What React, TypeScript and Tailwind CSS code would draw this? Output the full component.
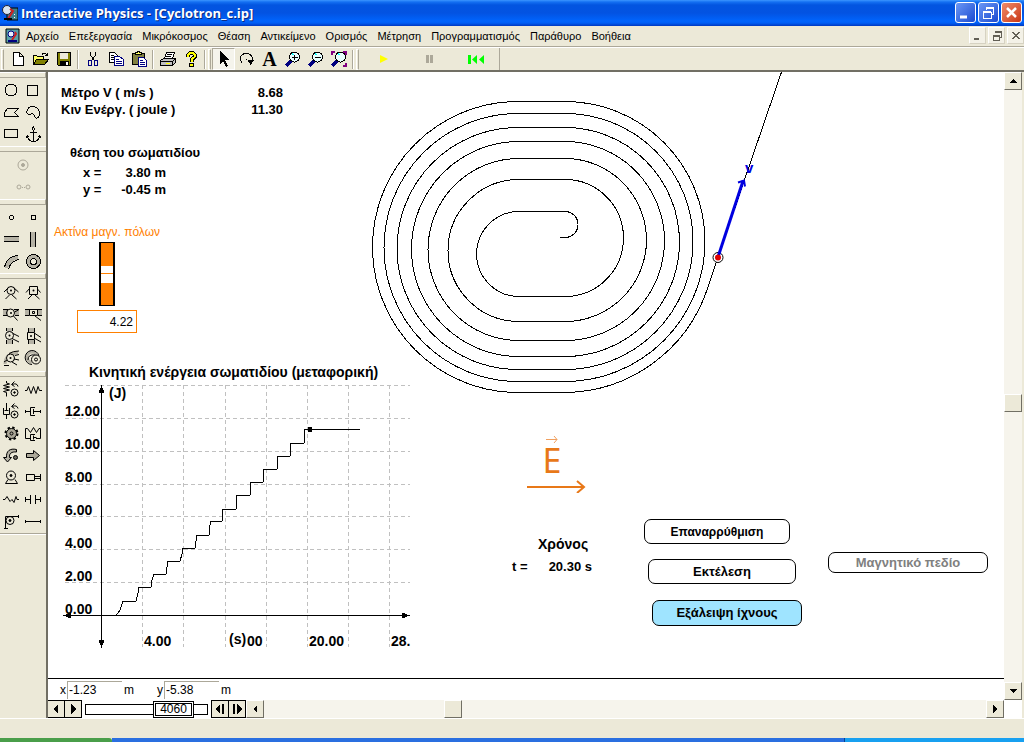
import type { ReactNode } from "react";

const menus = [
  "Αρχείο",
  "Επεξεργασία",
  "Μικρόκοσμος",
  "Θέαση",
  "Αντικείμενο",
  "Ορισμός",
  "Μέτρηση",
  "Προγραμματισμός",
  "Παράθυρο",
  "Βοήθεια",
];

type Tool = { label: string; icon: ReactNode };

const fileTools: Tool[] = [
  {
    label: "New",
    icon: <path d="M3.5 1.5h6l4 4v9h-10zM9.5 1.5v4h4" fill="#fff" stroke="#000" />,
  },
  {
    label: "Open",
    icon: (
      <>
        <path d="M.5 13.5v-9h3l1 1h6v3" fill="#ffff66" stroke="#000" />
        <path d="M.5 13.5l3-5h12l-4 5z" fill="#808000" stroke="#000" />
        <path d="M9 3.5c1-2 4-2 5 1M14.500 1.500v3h-3" fill="none" stroke="#000" />
      </>
    ),
  },
  {
    label: "Save",
    icon: (
      <>
        <path d="M1.500 1.500h13v13h-12l-1-1z" fill="#808000" stroke="#000" />
        <path d="M4 2h8v6H4z" fill="#ece9d8" />
        <path d="M4 10h9v4H4z" fill="#000" />
        <path d="M10 11h2v3h-2z" fill="#fff" />
      </>
    ),
  },
];

const editTools: Tool[] = [
  {
    label: "Cut",
    icon: (
      <>
        <path d="M5.500 1v3l4 6M10.500 1v3l-4 6" fill="none" stroke="#000" />
        <ellipse cx="5" cy="12" rx="2" ry="2.500" fill="none" stroke="#000080" />
        <ellipse cx="11" cy="12" rx="2" ry="2.500" fill="none" stroke="#000080" />
      </>
    ),
  },
  {
    label: "Copy",
    icon: (
      <>
        <path d="M1.500 1.500h5l3 3v7h-8z" fill="#fff" stroke="#000" />
        <path d="M3 4.500h3M3 6.500h4M3 8.500h4" stroke="#000" />
        <path d="M6.500 5.500h5l4 3v6h-9z" fill="#fff" stroke="#000080" />
        <path d="M8 8.500h3M8 10.500h6M8 12.500h6" stroke="#000080" />
      </>
    ),
  },
  {
    label: "Paste",
    icon: (
      <>
        <path d="M1.500 2.500h12v11h-12z" fill="#808040" stroke="#000" />
        <path d="M4.500 3.500v-2h2v-1h2v1h2v2z" fill="#ffff66" stroke="#000" />
        <path d="M7.500 6.500h5l3 3v6h-8z" fill="#fff" stroke="#000080" />
        <path d="M9 9.500h3M9 11.500h5M9 13.500h5" stroke="#000080" />
      </>
    ),
  },
];

const printTools: Tool[] = [
  {
    label: "Print",
    icon: (
      <>
        <path d="M4.500 7.500l2-6h8l-2 6" fill="#fff" stroke="#000" />
        <path d="M7 3.500h5M6 5.500h5" stroke="#000" />
        <path d="M.5 9.500l3-2h12v4l-3 3H.5z" fill="#c0c0c0" stroke="#000" />
        <path d="M.5 10.500h12v4M12.500 10.500l3-3" fill="none" stroke="#000" />
        <path d="M6 12h4v1H6z" fill="#ffff00" />
      </>
    ),
  },
  {
    label: "Help",
    icon: (
      <>
        <path d="M5 5.500V4l2-2h3l1.500 1.500V6L8.500 8.500V11" fill="none" stroke="#000" strokeWidth="4" />
        <path d="M5 5.500V4l2-2h3l1.500 1.500V6L8.500 8.500V10.500" fill="none" stroke="#ffff00" strokeWidth="2" />
        <path d="M6.500 12.500h4v3h-4z" fill="#ffff00" stroke="#000" />
      </>
    ),
  },
];

const lens = (
  <>
    <path d="M1 15l5-5" stroke="#000080" strokeWidth="3" />
    <circle cx="9.500" cy="6" r="5" fill="#e8ffff" stroke="#000" />
    <path d="M7 4l1-1" stroke="#00ffff" strokeWidth="2" />
  </>
);

const viewTools: Tool[] = [
  {
    label: "Rotate",
    icon: (
      <>
        <path d="M3 11.500C-.5 7 2 2.500 7 2.500s7 3 6 7" fill="none" stroke="#000" />
        <path d="M8.500 9h7l-4 5z" fill="#000" />
        <path d="M7 8h1v1H7z" fill="#000" />
      </>
    ),
  },
  { label: "Text", icon: null },
  { label: "Zoom in", icon: <>{lens}<path d="M7 6.500h6M9.500 4v5" stroke="#000" /></> },
  { label: "Zoom out", icon: <>{lens}<path d="M7 6.500h6" stroke="#000" /></> },
  {
    label: "Zoom to fit",
    icon: (
      <>
        {lens}
        <path d="M1 4V1h3M12 1h3v3M15 12v3h-3" fill="none" stroke="#800080" strokeWidth="2" />
      </>
    ),
  },
];

const bodyTools: Tool[] = [
  { label: "Circle", icon: <circle cx="10" cy="10" r="6" /> },
  { label: "Square", icon: <path d="M4.500 5.500h10v10h-10z" /> },
  { label: "Polygon", icon: <path d="M6.500 6.500h11l-4 4 4 4H3.500v-4z" /> },
  { label: "Curved body", icon: <path d="M4 9c1-5 8-6 11-2s2 8-1 9-2-3-4-4-3 2-5 0-2-2-1-3z" /> },
  { label: "Rectangle", icon: <path d="M3.500 5.500h13v8h-13z" /> },
  {
    label: "Anchor",
    icon: <path d="M10.500 6.500v11M7 8.500h7M4.500 12c0 3 2 5 6 5.500 4-.5 6-2.500 6-5.500M3 13.500l1.500-2 2 2M14.500 13.500l2-2 1.500 2M9 5l1.500-2L12 5l-1.500 1.500z" />,
  },
];

const linkTools: Tool[] = [
  { label: "Join", icon: <g stroke="#aca899"><circle cx="10" cy="10" r="5" /><circle cx="10" cy="10" r="1.500" fill="#aca899" /></g> },
  { label: "Split", icon: <g stroke="#aca899"><circle cx="6" cy="10" r="2" /><circle cx="15" cy="10" r="2" /><path d="M9 10.500h1M11 10.500h1" /></g> },
];

const slotTools: Tool[] = [
  { label: "Point", icon: <circle cx="10.500" cy="10.500" r="2" /> },
  { label: "Square point", icon: <path d="M8.500 8.500h4v4h-4z" /> },
  { label: "Horizontal slot", icon: <><path d="M3 8h15v4H3z" fill="#b5b2a5" stroke="none" /><path d="M3 7.500h15M3 12.500h15" /></> },
  { label: "Vertical slot", icon: <><path d="M8 3h4v15H8z" fill="#b5b2a5" stroke="none" /><path d="M7.500 3v15M12.500 3v15" /></> },
  { label: "Curved slot", icon: <><path d="M5 17Q8 8 17 6" stroke="#b5b2a5" strokeWidth="4" /><path d="M3.500 16Q6 5 17 4.500M7.500 18Q10 10 18 8.500" /></> },
  { label: "Closed slot", icon: <><circle cx="10.500" cy="10.500" r="5" stroke="#b5b2a5" strokeWidth="3" /><circle cx="10.500" cy="10.500" r="7" /><circle cx="10.500" cy="10.500" r="3" /></> },
];

const hub = <circle cx="10" cy="9" r="1" fill="#000" stroke="none" />;

const jointTools: Tool[] = [
  { label: "Pin joint", icon: <><circle cx="10" cy="8.500" r="4" /><circle cx="10" cy="8.500" r="1" fill="#000" stroke="none" /><path d="M3 10l4.500-4.500M12.500 5.500L17.500 10M8.500 13L4.500 17M11 13l4.500 4" /></> },
  { label: "Rigid joint", icon: <><path d="M6.500 4.500h8v8h-8zM3 10.500l3.500-4M14.500 7l3 3.500M9 13l-4 4M12 13l4.500 4" /><circle cx="10.500" cy="8.500" r="1" fill="#000" stroke="none" /></> },
  { label: "Slot joint", icon: <><path d="M2 6h5v5H2zM14 6h4v5h-4z" fill="#b5b2a5" stroke="none" /><circle cx="9.500" cy="9" r="4" />{hub}<path d="M2 5.500h5M13 5.500h5M2 11.500h4M14 11.500h4M12.500 12l4 4.500M13.500 8l4-2" /></> },
  { label: "Keyed slot joint", icon: <><path d="M2 6h4v5H2zM14 6h5v5h-5z" fill="#b5b2a5" stroke="none" /><path d="M6.500 5.500h8v6h-8zM2 5.500h17M2 11.500h4M15 11.500h4M12 12l6 4.500M9.500 7.500h2v2h-2z" /></> },
  { label: "Vertical slot joint", icon: <><path d="M6 2h5v4H6zM6 14h5v4H6z" fill="#b5b2a5" stroke="none" /><path d="M5.500 2v3M11.500 2v3M5.500 14v4M11.500 14v4" /><circle cx="8.500" cy="9.500" r="4" /><circle cx="8.500" cy="9.500" r="1" fill="#000" stroke="none" /><path d="M12 7.500l6 3M11 12.500l7 3.500" /></> },
  { label: "Vertical keyed joint", icon: <><path d="M6 2h5v4H6zM6 14h5v4H6z" fill="#b5b2a5" stroke="none" /><path d="M4.500 6.500h7v7h-7zM5.500 2v4M11.500 2v4M5.500 14v4M11.500 14v4M12 7.500l6 4M12 12.500l6 3.500M7.500 9.500h1v1h-1z" /></> },
  { label: "Curved slot joint", icon: <><path d="M4 16Q4 6 17 4.500" stroke="#b5b2a5" strokeWidth="3" /><circle cx="9.500" cy="10" r="4" fill="#ece9d8" /><circle cx="9.500" cy="10" r="1" fill="#000" stroke="none" /><path d="M8 5.500Q12 3 18 3M14 7.500l4-1M13 11l5 1M11 14l5 3M3 17.500h5M3 14l3-2" /></> },
  { label: "Closed curved joint", icon: <><circle cx="9" cy="9" r="5" stroke="#b5b2a5" strokeWidth="3" /><path d="M9 16.500A7 7 0 1 1 16 8M5 12q0-6 7-5" /><circle cx="13" cy="11.500" r="4.500" fill="#ece9d8" /><circle cx="13" cy="11.500" r="1.500" /></> },
];

const forceTools: Tool[] = [
  { label: "Rotational spring", icon: <><path d="M5.500 2v2l3 1-6 1.500 6 1.500-6 1.500 6 1.500-6 1.500 3 1v4M11 5.500q5-2 6 2M13.500 2.500l-3 3 3 2" /><circle cx="13.500" cy="13.500" r="3.500" /><circle cx="13.500" cy="13.500" r=".8" fill="#000" /></> },
  { label: "Spring", icon: <path d="M2 11.500h2l1.500-4 2.500 7 2.500-7 2.500 7 2-7 1.500 4h2.500" /> },
  { label: "Rotational damper", icon: <><path d="M5.500 2v7M3.500 9.500h4M2.500 7v6.500h6V7M5.500 14v4M11 5.500q5-2 6 2M13.500 2.500l-3 3 3 2" /><circle cx="13.500" cy="13.500" r="3.500" /><circle cx="13.500" cy="13.500" r=".8" fill="#000" /></> },
  { label: "Damper", icon: <path d="M3 10.500h4M10 10.500h7M12 6.500H7.500v8H12M10.500 8v5M2.500 9v3M17.500 9v3" /> },
  { label: "Gear", icon: <><circle cx="10.500" cy="10.500" r="6" strokeWidth="2" strokeDasharray="2.400 2.312" /><circle cx="10.500" cy="10.500" r="5" fill="#aca899" /><circle cx="10.500" cy="10.500" r="1.500" /></> },
  { label: "Spring damper", icon: <path d="M7 15.500H2.500v-10h2l3 4 3-5 3 5 2.500-4h1.500v10H13M12 11.500H7.500v6H12M10.500 12.500v4M10.500 14.500h3" /> },
  { label: "Torque", icon: <><path d="M15.500 4.500C9 3 5 6 5.500 12.500h-3L6.500 17l4-4.500h-2c-.5-4 2-6 7-5.500z" fill="#b5b2a5" /><circle cx="14.500" cy="12.500" r="2" fill="#6b695f" /></> },
  { label: "Force", icon: <path d="M3.500 8.500h7v-3l6 5-6 5v-3h-7z" fill="#aca899" /> },
  { label: "Motor", icon: <><circle cx="10" cy="8.500" r="4.500" /><circle cx="10" cy="8.500" r="1" fill="#000" /><path d="M7 12.500l-2.500 4h12l-2.500-4" /></> },
  { label: "Actuator", icon: <path d="M3.500 7v7M17.500 7v7M3.500 7.500h8v6h-8M11.500 9.500h6M11.500 11.500h6" /> },
  { label: "Rope", icon: <path d="M2 10.500h2l2-3 3 5 2-2 2 3 2-6 1 3h2" /> },
  { label: "Separator", icon: <path d="M3 10.500h4M12 10.500h5M7.500 6v9M12.500 6v9M2.500 8v5M17.500 8v5" /> },
  { label: "Pulley", icon: <><circle cx="9" cy="9.500" r="4" /><circle cx="9" cy="9.500" r="1" fill="#000" /><path d="M4.500 17V5.500h13M3 17.500h4M17.500 4v3" /></> },
  { label: "Rod", icon: <path d="M3 10.500h14M2.500 9v3M17.500 9v3" /> },
];

const steps =
  "52,260 66,260 68,258 70,255 73,246 86,246 88,238 89,232 101,232 102,225 104,219 116,219 117,212 118,206 130,206 132,199 133,193 145,193 146,186 147,180 159,180 160,170 161,166 172,166 173,154 186,154 187,140 200,140 201,127 213,127 214,114 227,114 228,101 240,101 241,88 254,88 255,74 310,74";

const Grip = () => <span className="h-[21px] w-[3px] shrink-0 border-y border-l border-white border-r border-r-[#aca899]" />;
const Separator = () => <span className="mx-[2px] h-[19px] w-[2px] shrink-0 border-l border-[#aca899] bg-white" />;

const ToolButton = ({ tool }: { tool: Tool }) => (
  <button aria-label={tool.label} className="flex h-[22px] w-[23px] items-center justify-center">
    {tool.icon ? (
      <svg viewBox="0 0 16 16" className="size-4" shapeRendering="crispEdges">{tool.icon}</svg>
    ) : (
      <span className="font-['Liberation_Serif',serif] text-[20px] leading-[22px] font-bold">A</span>
    )}
  </button>
);

const Palette = ({ tools, smooth = false, wide = false }: { tools: Tool[]; smooth?: boolean; wide?: boolean }) => (
  <div>
    <div className="h-[6px] border-t border-b border-t-white border-b-[#aca899] border-r border-r-[#aca899]" />
    <div className={wide ? "grid grid-cols-2 py-[2px] pr-[2px]" : "grid grid-cols-2 py-px pr-[2px]"}>
      {tools.map((tool) => (
        <button key={tool.label} aria-label={tool.label} className="flex h-[22px] items-center justify-center">
          <svg
            viewBox="0 0 20 20"
            className="size-5"
            fill="none"
            stroke="#000"
            shapeRendering={smooth ? "auto" : "crispEdges"}
          >
            {tool.icon}
          </svg>
        </button>
      ))}
    </div>
  </div>
);

const ArrowButton = ({ label, d }: { label: string; d: string }) => (
  <button
    aria-label={label}
    className="flex size-[18px] shrink-0 items-center justify-center border border-t-white border-r-[#716f64] border-b-[#716f64] border-l-white bg-[#ece9d8]"
  >
    <svg viewBox="0 0 12 12" className="size-3 shrink-0" shapeRendering="crispEdges"><path d={d} /></svg>
  </button>
);

const PlayerButton = ({ label, d }: { label: string; d: string }) => (
  <button
    aria-label={label}
    className="flex h-[18px] w-[17px] shrink-0 items-center justify-center border-y border-r border-black bg-[#ece9d8]"
  >
    <svg viewBox="0 0 12 12" className="size-3 shrink-0" shapeRendering="crispEdges"><path d={d} /></svg>
  </button>
);

const Thumb = () => (
  <div className="size-[18px] shrink-0 border border-t-white border-r-[#716f64] border-b-[#716f64] border-l-white bg-[#ece9d8]" />
);

const TitleBar = () => (
  <header className="flex h-[26px] items-center justify-between bg-[linear-gradient(#3c96ff_0px,#1470f2_2px,#0355e0_5px,#0353e2_13px,#0064fd_21px,#005ef5_23px,#0038c0_26px)] pr-[2px] pl-[2px]">
    <div className="flex items-center gap-[3px]">
      <svg viewBox="0 0 16 16" className="size-4">
        <path d="M5 3h11v12H5z" fill="#3b7f8c" stroke="#000" />
        <path d="M7 5h1v1H7zM10 6h1v1h-1zM12 9h1v1h-1zM12 12h1v1h-1z" fill="#fff" />
        <circle cx="5" cy="5" r="4.500" fill="#d8e4f0" stroke="#223" />
        <path d="M8 4l3 2-5 8" fill="none" stroke="#d02020" strokeWidth="2" />
        <path d="M2 14h8" stroke="#000" strokeWidth="2" />
      </svg>
      <h1 className="font-['Open_Sans',sans-serif] text-[13px] leading-5 font-bold text-white [text-shadow:1px_1px_#0a2a80]">
        Interactive Physics - [Cyclotron_c.ip]
      </h1>
    </div>
    <div className="flex gap-[2px] pb-px">
      <button aria-label="Minimize" className="size-[21px] rounded-[3px] border border-white bg-linear-to-br from-[#6c97f5] to-[#1c49d0]">
        <svg viewBox="0 0 19 19"><path d="M4 14h7" stroke="#fff" strokeWidth="3" /></svg>
      </button>
      <button aria-label="Restore" className="size-[21px] rounded-[3px] border border-white bg-linear-to-br from-[#6c97f5] to-[#1c49d0]">
        <svg viewBox="0 0 19 19" fill="none" stroke="#fff" shapeRendering="crispEdges">
          <path d="M7 4.500h8M14.500 4v7H12M7.500 4v3M7 5.500h7M4 8.500h8M4 9.500h8v5.500H4.500V9" />
        </svg>
      </button>
      <button aria-label="Close" className="size-[21px] rounded-[3px] border border-white bg-linear-to-br from-[#f08a68] to-[#c8330f]">
        <svg viewBox="0 0 19 19"><path d="M5 5l9 9M14 5l-9 9" stroke="#fff" strokeWidth="2.500" /></svg>
      </button>
    </div>
  </header>
);

const MenuBar = () => (
  <nav className="flex h-[21px] items-center border-b border-[#aca899] pb-px">
    <svg viewBox="0 0 16 16" className="ml-[5px] size-4">
      <path d="M1 1h13v14H1z" fill="#58a0a8" stroke="#000" />
      <circle cx="6" cy="6" r="3" fill="#e8f0ff" stroke="#000080" />
      <path d="M10 4l1 2-4 6" fill="none" stroke="#d02020" strokeWidth="2" />
      <path d="M3 13h9" stroke="#000080" strokeWidth="2" />
    </svg>
    <div className="flex flex-1 gap-[10px] pl-[5px]">
      {menus.map((menu) => (
        <button key={menu} className="text-[11px] leading-4 whitespace-nowrap">{menu}</button>
      ))}
    </div>
    <div className="flex gap-[2px]">
      {["M4 11.500h5M4 10.500h5", "M6 3.500h7M6 4.500h7M12.500 4v5H11M4 7.500h6.500v5h-6V7M4 8.500h6", "M4 4l7 7M11 4l-7 7M5 4l7 7M12 4l-7 7"].map((d, i) => (
        <button
          key={d}
          aria-label={["Minimize document", "Restore document", "Close document"][i]}
          className="size-[17px] border border-t-white border-r-[#d6d2c2] border-b-[#d6d2c2] border-l-white bg-[#f3f1e7]"
        >
          <svg viewBox="0 0 15 15" fill="none" stroke="#625f55" shapeRendering="crispEdges"><path d={d} /></svg>
        </button>
      ))}
    </div>
  </nav>
);

const ToolBar = () => (
  <div className="flex h-[25px] items-center border-t border-white border-b-2 border-b-[#716f64] pl-px">
    <Grip />
    <div className="flex pl-[2px]">{fileTools.map((t) => <ToolButton key={t.label} tool={t} />)}</div>
    <Separator />
    <div className="flex">{editTools.map((t) => <ToolButton key={t.label} tool={t} />)}</div>
    <Separator />
    <div className="flex">{printTools.map((t) => <ToolButton key={t.label} tool={t} />)}</div>
    <Separator />
    <Grip />
    <button aria-label="Select" className="ml-px flex h-[22px] w-[23px] items-center justify-center border border-[#aca899] border-r-white border-b-white bg-[#f5f4ec]">
      <svg viewBox="0 0 16 16" className="size-4 shrink-0" shapeRendering="crispEdges">
        <path d="M4 0v13l3-3 3 6 2-1-3-6h4z" />
      </svg>
    </button>
    <div className="flex">{viewTools.map((t) => <ToolButton key={t.label} tool={t} />)}</div>
    <Separator />
    <Grip />
    <div className="flex border-r border-[#aca899] pl-[2px]">
      <button aria-label="Run" className="flex h-[22px] w-[46px] items-center justify-center">
        <svg viewBox="0 0 16 16" className="size-4"><path d="M4 4l8 4-8 4z" fill="#ffff00" /></svg>
      </button>
      <button aria-label="Pause" className="flex h-[22px] w-[46px] items-center justify-center">
        <svg viewBox="0 0 16 16" className="size-4"><path d="M4 4h3v8H4zM8 4h3v8H8z" fill="#aca899" /></svg>
      </button>
      <button aria-label="Reset" className="flex h-[22px] w-[46px] items-center justify-center">
        <svg viewBox="0 0 16 16" className="size-4"><path d="M0 4h3v9H0zM9 4v9L4 8.500zM16 4v9l-5-4.500z" fill="#00ff00" /></svg>
      </button>
    </div>
  </div>
);

const Trajectory = () => (
  <svg viewBox="372 72 412 324" className="absolute top-0 left-[324px] h-[324px] w-[412px]" fill="none" stroke="#000">
    <path
      shapeRendering="crispEdges"
      d="M560 237.500h5a13 13 0 0 0 0-26H519
        a42.500 42.500 0 0 0 0 85H565a58.500 58.500 0 0 0 0-117H519
        a71 71 0 0 0 0 142H565a81.500 81.500 0 0 0 0-163H519
        a91 91 0 0 0 0 182H565a99.500 99.500 0 0 0 0-199H519
        a107.500 107.500 0 0 0 0 215H565a114.500 114.500 0 0 0 0-229H518
        a121 121 0 0 0 0 242H565a128 128 0 0 0 0-256H518
        a134 134 0 0 0 0 268H565a140 140 0 0 0 0-280H518
        a145.500 145.500 0 0 0 0 291H565A152 152 0 0 0 707 290L718 257L781.500 72"
    />
    <circle cx="718" cy="257.500" r="5" fill="#fff" />
    <path d="M718 257l25-76" stroke="#0000e0" strokeWidth="3" />
    <path d="M738 182.500l6-2 1 6" stroke="#0000e0" strokeWidth="2" />
    <circle cx="718" cy="257.500" r="3" fill="#e00000" stroke="none" />
    <text x="745" y="173" fill="#0000e0" stroke="none" fontSize="15" fontWeight="bold">v</text>
  </svg>
);

const EnergyChart = () => (
  <figure className="absolute top-[290px] left-[2px]">
    <figcaption className="absolute top-0 left-[39px] text-[14px] leading-5 font-bold whitespace-nowrap">
      Κινητική ενέργεια σωματιδίου (μεταφορική)
    </figcaption>
    <svg viewBox="0 7 370 300" className="h-[300px] w-[370px]" shapeRendering="crispEdges">
      <g stroke="#c0c0c0" strokeDasharray="4 3">
        {[92, 133, 175, 216, 257, 298, 339].map((x) => <path key={x} d={`M${x}.5 30V292`} />)}
        {[30, 63, 96, 129, 161, 194, 227].map((y) => <path key={y} d={`M15 ${y}.5H360`} />)}
      </g>
      <path d="M93 279h30v13H93zM178 276h36v16H178zM258 279h38v13H258zM340 279h22v13H340z" fill="#fff" />
      <path d="M13 260.500H360M51.500 31V293" stroke="#000" />
      <path d="M13 260.500l8-3v6zM360 260.500l-8-3v6zM51.500 30l-3 8h6zM51.500 293l-3-8h6z" />
      <polyline points={steps} fill="none" stroke="#000" />
      <circle cx="260" cy="74.500" r="2.500" />
      <g fontSize="14" fontWeight="bold">
        {["12.00", "10.00", "8.00", "6.00", "4.00", "2.00", "0.00"].map((label, i) => (
          <text key={label} x="15" y={61 + i * 33}>{label}</text>
        ))}
        <text x="59" y="43">(J)</text>
        <text x="94" y="291">4.00</text>
        <text x="179" y="289">(s)</text>
        <text x="197" y="291">00</text>
        <text x="259" y="291">20.00</text>
        <text x="341" y="291">28.</text>
      </g>
    </svg>
  </figure>
);

const World = () => (
  <main className="relative min-h-[606px] flex-1 overflow-hidden bg-white">
    <dl className="absolute top-[12px] left-[13px] grid w-[222px] grid-cols-[1fr_auto] text-[13px] leading-[17px] font-bold">
      <dt>Μέτρο V ( m/s )</dt>
      <dd className="text-right">8.68</dd>
      <dt>Κιν Ενέργ. ( joule )</dt>
      <dd className="text-right">11.30</dd>
    </dl>
    <section className="absolute top-[72px] left-[22px] text-[13px] leading-[17px] font-bold whitespace-nowrap">
      <h2>θέση του σωματιδίου</h2>
      <dl className="mt-[3px] ml-[13px] grid w-[83px] grid-cols-[auto_1fr]">
        <dt>x =</dt>
        <dd className="text-right">3.80 m</dd>
        <dt>y =</dt>
        <dd className="text-right">-0.45 m</dd>
      </dl>
    </section>

    <div className="absolute top-[152px] left-[8px] flex w-[102px] flex-col items-center text-[#ff8000]">
      <label htmlFor="radius" className="text-[12px] leading-4 whitespace-nowrap">Ακτίνα μαγν. πόλων</label>
      <input
        id="radius"
        type="range"
        min="0"
        max="8.44"
        step="0.01"
        defaultValue="4.22"
        className="mt-[2px] h-[64px] w-[16px] appearance-none border-x border-y-2 border-black bg-[#ff8000] [writing-mode:vertical-lr] [&::-webkit-slider-thumb]:h-[17px] [&::-webkit-slider-thumb]:w-[14px] [&::-webkit-slider-thumb]:appearance-none [&::-webkit-slider-thumb]:border-y [&::-webkit-slider-thumb]:border-black [&::-webkit-slider-thumb]:bg-[linear-gradient(#fff_7px,#ff8000_7px,#ff8000_8px,#fff_8px)]"
      />
      <input
        aria-label="Ακτίνα"
        defaultValue="4.22"
        className="mt-[4px] h-[23px] w-[60px] border border-[#ff8000] bg-white pr-[3px] text-right text-[12px] text-black"
      />
    </div>

    <EnergyChart />
    <Trajectory />

    <div className="absolute top-[363px] left-[478px] flex w-[60px] flex-col items-center text-[#e87818]">
      <svg viewBox="0 0 12 8" className="ml-[-8px] h-[8px] w-[12px]" fill="none" stroke="#f0a060">
        <path d="M0 4.500h11M8 1l3 3.500L8 8" />
      </svg>
      <span className="ml-[-8px] font-['Noto_Sans',sans-serif] text-[34px] leading-[34px]">E</span>
      <svg viewBox="0 0 60 16" className="h-[16px] w-[60px]" fill="none" stroke="#e87818" strokeWidth="2">
        <path d="M1 10h57M51 4l7 6-7 6" />
      </svg>
    </div>

    <section className="absolute top-[464px] left-[464px] w-[80px] text-[13px] leading-[17px] font-bold">
      <h2 className="pl-[26px] text-[14px]">Χρόνος</h2>
      <p className="mt-[5px] flex justify-between whitespace-nowrap"><span>t =</span><span>20.30 s</span></p>
    </section>

    <button className="absolute top-[447px] left-[596px] h-[25px] w-[146px] rounded-[7px] border border-black text-[12px] font-bold">Επαναρρύθμιση</button>
    <button className="absolute top-[487px] left-[600px] h-[25px] w-[148px] rounded-[7px] border border-black text-[13px] font-bold">Εκτέλεση</button>
    <button className="absolute top-[528px] left-[604px] h-[26px] w-[150px] rounded-[7px] border border-black bg-[#9fe4ff] text-[13px] font-bold">Εξάλειψη ίχνους</button>
    <button disabled className="absolute top-[480px] left-[780px] h-[21px] w-[160px] rounded-[7px] border border-black text-[13px] leading-4 font-bold text-[#808080]">Μαγνητικό πεδίο</button>
  </main>
);

const Coordinate = ({ name, value }: { name: string; value: string }) => (
  <label className="flex w-[97px] items-center text-[12px]">
    <span className="w-[7px]">{name}</span>
    <input defaultValue={value} className="h-[18px] w-[55px] border-t border-l border-[#aca899] pl-px" />
    <span className="pl-[2px]">m</span>
  </label>
);

const Player = () => (
  <div className="flex h-[18px] w-[198px] items-center bg-white">
    <PlayerButton label="Step back" d="M8 1v10L3 6z" />
    <PlayerButton label="Step forward" d="M4 1v10l5-5z" />
    <div className="relative ml-[3px] flex flex-1 items-center">
      <input
        aria-label="Frame"
        type="range"
        min="0"
        max="5000"
        defaultValue="4060"
        className="h-[11px] w-full appearance-none border border-black bg-white [&::-webkit-slider-thumb]:size-[9px] [&::-webkit-slider-thumb]:appearance-none"
      />
      <output className="absolute right-[14px] w-[41px] border-3 border-double border-black bg-white text-center text-[12px] leading-[11px]">4060</output>
    </div>
    <div className="ml-[3px] flex border-l border-black">
      <PlayerButton label="Previous frame" d="M6 1v10L1 6zM8 1h2v10H8z" />
      <PlayerButton label="Next frame" d="M2 1h2v10H2zM6 1v10l5-5z" />
    </div>
  </div>
);

export default function App() {
  return (
    <div className="flex min-h-screen flex-col bg-[#ece9d8] font-['Liberation_Sans',Arial,sans-serif] text-black">
      <TitleBar />
      <MenuBar />
      <ToolBar />
      <div className="flex flex-1">
        <aside className="w-[48px] shrink-0 border-r-2 border-[#716f64]">
          <Palette tools={bodyTools} />
          <div className="h-[53px]">
            <div className="h-[6px] border-t border-b border-t-white border-b-[#aca899]" />
            <div className="flex flex-col items-center pt-[2px]">
              {linkTools.map((tool) => (
                <button key={tool.label} aria-label={tool.label} disabled className="flex h-[22px] items-center">
                  <svg viewBox="0 0 20 20" className="size-5" fill="none">{tool.icon}</svg>
                </button>
              ))}
            </div>
          </div>
          <Palette tools={slotTools} />
          <Palette tools={jointTools} smooth wide />
          <Palette tools={forceTools} smooth />
          <div className="border-t border-b border-t-[#aca899] border-b-white" />
        </aside>
        <div className="flex min-w-0 flex-1 flex-col">
          <div className="flex flex-1">
            <div className="flex min-w-0 flex-1 flex-col">
              <World />
              <div className="flex h-[22px] items-center border-t border-black bg-white pl-[12px]">
                <Coordinate name="x" value="-1.23" />
                <Coordinate name="y" value="-5.38" />
              </div>
            </div>
            <div className="mr-[2px] flex w-[18px] flex-col bg-[#f6f4ec]">
              <ArrowButton label="Scroll up" d="M2 8h8L6 4z" />
              <div className="flex-[305]" />
              <Thumb />
              <div className="flex-[271]" />
              <ArrowButton label="Scroll down" d="M2 4h8L6 8z" />
            </div>
          </div>
          <div className="flex h-[18px]">
            <Player />
            <div className="flex flex-1 bg-[#f6f4ec]">
              <ArrowButton label="Scroll left" d="M8 2v8L4 6z" />
              <div className="flex-[181]" />
              <Thumb />
              <div className="flex-[526]" />
              <ArrowButton label="Scroll right" d="M4 2v8l4-4z" />
            </div>
            <div className="mr-[2px] w-[18px] bg-white" />
          </div>
        </div>
      </div>
      <footer>
        <div className="h-[20px] border-t border-white" />
        <div className="flex h-[4px]">
          <div className="w-[112px] rounded-tr-[3px] bg-[#4a9e4a]" />
          <div className="flex-1 bg-[#2a6fe0]" />
          <div className="w-[180px] border-l border-[#0a4090] bg-[#18a0f0]" />
        </div>
      </footer>
    </div>
  );
}
